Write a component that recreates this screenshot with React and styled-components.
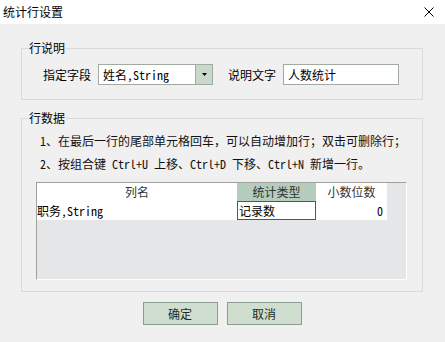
import React from "react";
import styled, { createGlobalStyle } from "styled-components";

const GlobalStyle = createGlobalStyle`
  html, body { margin: 0; padding: 0; background: #f0f0f0; }
  body {
    font-family: "Noto Sans Mono CJK SC", "Noto Sans CJK SC", sans-serif;
    font-size: 12px;
    color: #000;
  }
  * { box-sizing: border-box; }
`;

const Window = styled.div`
  width: 445px;
  height: 342px;
  display: flex;
  flex-direction: column;
  background: #f0f0f0;
`;

const TitleBar = styled.div`
  height: 24px;
  flex: none;
  background: #fff;
  display: flex;
  align-items: center;
  justify-content: space-between;
  padding: 0 11px 0 3px;
`;

const Title = styled.span`
  font-family: "Noto Sans CJK SC", sans-serif;
  font-size: 12px;
  line-height: 24px;
  color: #000;
`;

const Body = styled.div`
  flex: 1;
  display: flex;
  flex-direction: column;
  padding: 17px 22px 0 21px;
`;

const Group = styled.fieldset`
  margin: ${(p) => p.$mt || 0}px 0 0 0;
  padding: 0;
  border: 1px solid #dadada;
  min-width: 0;
`;

const Legend = styled.legend`
  margin-left: 6px;
  padding: 0 1px;
  font-size: 12px;
  line-height: 14px;
  color: #000;
`;

const FieldRow = styled.div`
  display: flex;
  align-items: center;
  padding: 9px 0 14px 21px;
`;

const Label = styled.span`
  line-height: 21px;
  margin-left: ${(p) => p.$ml || 0}px;
  margin-right: 7px;
  white-space: nowrap;
`;

const Combo = styled.div`
  width: 115px;
  height: 21px;
  border: 1px solid #a2aba2;
  background: #fff;
  display: flex;
`;

const ComboText = styled.span`
  flex: 1;
  padding-left: 4px;
  line-height: 19px;
  white-space: nowrap;
  overflow: hidden;
`;

const ComboButton = styled.div`
  width: 17px;
  border-left: 1px solid #a2aba2;
  background: #c9d9c9;
  display: flex;
  align-items: center;
  justify-content: center;
`;

const TextInput = styled.div`
  width: 116px;
  height: 21px;
  border: 1px solid #a2aba2;
  background: #fff;
  padding-left: 4px;
  line-height: 19px;
`;

const DataArea = styled.div`
  padding: 4px 15px 11px 14px;
`;

const Hint = styled.div`
  padding-left: 4px;
  line-height: 23px;
  white-space: nowrap;
  color: #111;
`;

const Grid = styled.div`
  margin-top: 7px;
  height: 98px;
  border-top: 1px solid #a0a0a0;
  border-left: 1px solid #a0a0a0;
  border-right: 1px solid #fff;
  border-bottom: 1px solid #fff;
  background: #e5e6e8;
`;

const GridRow = styled.div`
  display: grid;
  grid-template-columns: 200px 79px 71px;
  height: ${(p) => p.$h}px;
`;

const HeadCell = styled.div`
  background: ${(p) => (p.$active ? "#b4cdbd" : "#fff")};
  color: #333;
  text-align: center;
  line-height: ${(p) => p.$h}px;
`;

const Cell = styled.div`
  background: #fff;
  line-height: 17px;
  text-align: ${(p) => (p.$right ? "right" : "left")};
  padding: 0 ${(p) => (p.$right ? 3 : 0)}px 0 ${(p) => (p.$focus ? 1 : 0)}px;
  border: ${(p) => (p.$focus ? "1px solid #2e6b4c" : "1px solid #fff")};
  border-left-width: ${(p) => (p.$focus ? 1 : 0)}px;
  white-space: nowrap;
`;

const Footer = styled.div`
  display: flex;
  justify-content: center;
  gap: 9px;
  margin-top: 10px;
`;

const Button = styled.button`
  width: 75px;
  height: 23px;
  background: #cfdecf;
  border: 1px solid #8d9d8d;
  font-family: "Noto Sans CJK SC", sans-serif;
  font-size: 12px;
  color: #1c2c1c;
  padding: 0;
  line-height: 21px;
`;

export default function App() {
  return (
    <>
      <GlobalStyle />
      <Window>
        <TitleBar>
          <Title>统计行设置</Title>
          <svg width="10" height="10" viewBox="0 0 10 10">
            <path d="M0.5 0.5 L9.5 9.5 M9.5 0.5 L0.5 9.5" stroke="#000" strokeWidth="1" />
          </svg>
        </TitleBar>
        <Body>
          <Group>
            <Legend>行说明</Legend>
            <FieldRow>
              <Label>指定字段</Label>
              <Combo>
                <ComboText>姓名,String</ComboText>
                <ComboButton>
                  <svg width="5" height="3" viewBox="0 0 5 3">
                    <path d="M0 0 H5 L2.5 3 Z" fill="#000" />
                  </svg>
                </ComboButton>
              </Combo>
              <Label $ml={15}>说明文字</Label>
              <TextInput>人数统计</TextInput>
            </FieldRow>
          </Group>
          <Group $mt={11}>
            <Legend>行数据</Legend>
            <DataArea>
              <Hint>1、在最后一行的尾部单元格回车，可以自动增加行；双击可删除行；</Hint>
              <Hint>2、按组合键 Ctrl+U 上移、Ctrl+D 下移、Ctrl+N 新增一行。</Hint>
              <Grid>
                <GridRow $h={18}>
                  <HeadCell $h={18}>列名</HeadCell>
                  <HeadCell $h={18} $active>统计类型</HeadCell>
                  <HeadCell $h={18}>小数位数</HeadCell>
                </GridRow>
                <GridRow $h={19}>
                  <Cell>职务,String</Cell>
                  <Cell $focus>记录数</Cell>
                  <Cell $right>0</Cell>
                </GridRow>
              </Grid>
            </DataArea>
          </Group>
          <Footer>
            <Button>确定</Button>
            <Button>取消</Button>
          </Footer>
        </Body>
      </Window>
    </>
  );
}
